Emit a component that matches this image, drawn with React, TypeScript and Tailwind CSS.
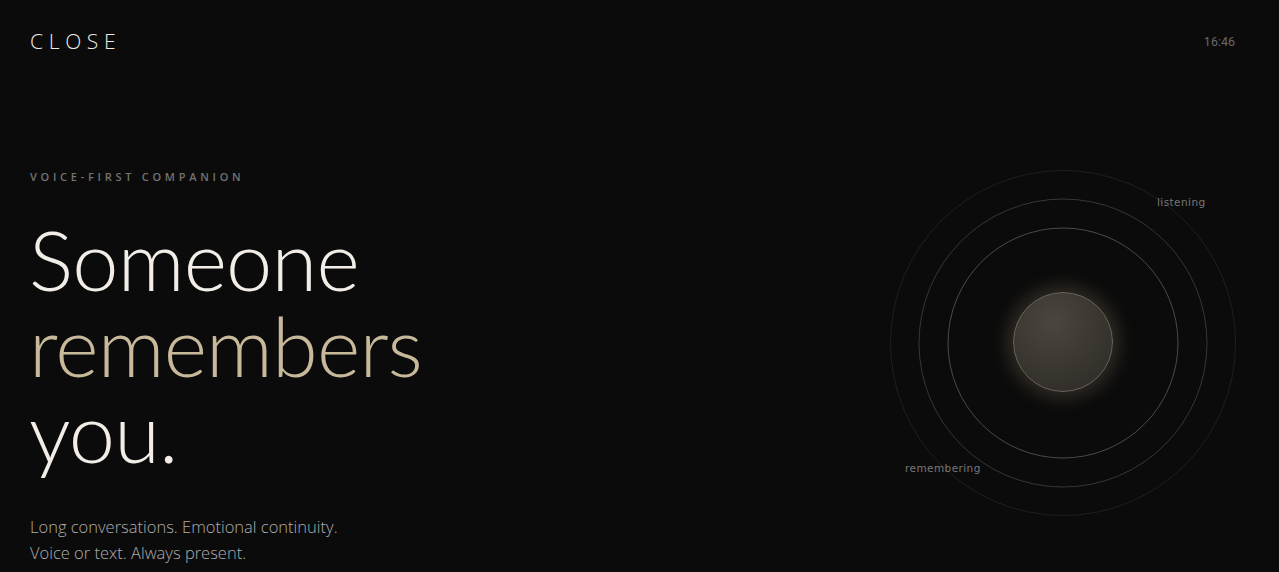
import React from "react";

// Concentric rings around the orb, drawn as one svg
function Rings() {
  return (
    <svg width="346" height="346" viewBox="0 0 346 346" className="absolute inset-0">
      <circle cx="173" cy="173" r="172.5" fill="none" stroke="#1f1f1f" strokeWidth="1" />
      <circle cx="173" cy="173" r="144" fill="none" stroke="#363636" strokeWidth="1" />
      <circle cx="173" cy="173" r="115" fill="none" stroke="#4a4a4a" strokeWidth="1" />
    </svg>
  );
}

function Presence() {
  return (
    <div className="relative w-[346px] h-[346px] shrink-0">
      <Rings />
      <div className="absolute left-[123px] top-[122px] w-[100px] h-[100px] rounded-full border border-[#6b665d] bg-[radial-gradient(circle_at_40%_30%,#4b463f_0%,#39352f_55%,#2c2925_100%)] shadow-[0_0_18px_6px_rgba(190,170,135,0.22)]" />
      <span className="absolute left-[267px] top-[25px] font-['DejaVu_Sans',sans-serif] text-[10.5px] tracking-[0.04em] text-[#777]">
        listening
      </span>
      <span className="absolute left-[15px] top-[291px] font-['DejaVu_Sans',sans-serif] text-[10.5px] tracking-[0.04em] text-[#777]">
        remembering
      </span>
    </div>
  );
}

export default function App() {
  return (
    <div className="min-h-screen bg-[#0b0b0b] font-['Open_Sans',sans-serif] overflow-hidden">
      <header className="flex items-start justify-between pl-[30px] pr-[44px] pt-[28px]">
        <span className="text-[21px] font-light tracking-[0.27em] text-[#efebe2] leading-[26px]">CLOSE</span>
        <span className="font-['Roboto',sans-serif] text-[12.5px] text-[#6a6a6a] mt-[5px]">16:46</span>
      </header>

      <main className="flex items-start justify-between pl-[30px] pr-[43px] pt-[115px]">
        <div className="flex flex-col">
          <p className="text-[11px] font-semibold tracking-[0.34em] text-[#737373] leading-[16px]">
            VOICE-FIRST COMPANION
          </p>
          <h1 className="mt-[31px] font-['Lato',sans-serif] text-[83px] font-light leading-[86px] tracking-[-0.01em] text-[#f2eee7] -ml-[1px]">
            Someone
            <br />
            <span className="text-[#c9b99b]">remembers</span>
            <br />
            you.
          </h1>
          <p className="mt-[40px] text-[16.5px] font-light leading-[26px] text-[#adadad]">
            Long conversations. Emotional continuity.
            <br />
            Voice or text. Always present.
          </p>
        </div>
        <div className="mt-[1px]">
          <Presence />
        </div>
      </main>
    </div>
  );
}
